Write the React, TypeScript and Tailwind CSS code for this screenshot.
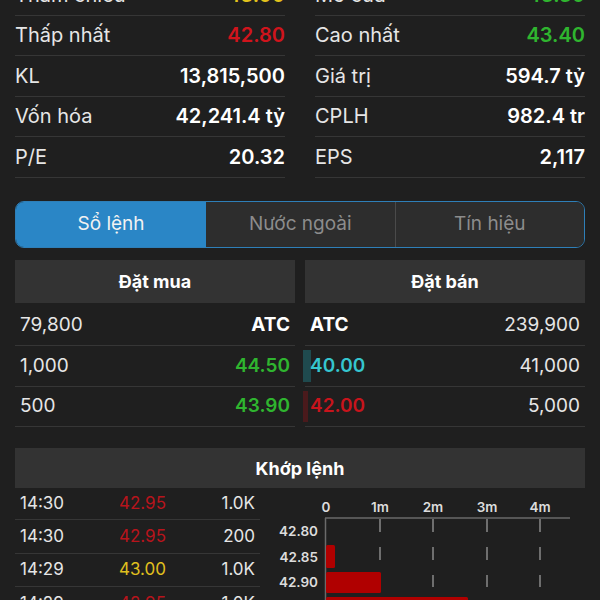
import React from "react";

const LEFT_STATS = [
  { label: "Tham chiếu", value: "43.00", color: "text-[#e3c31c]" },
  { label: "Thấp nhất", value: "42.80", color: "text-[#d0141c]" },
  { label: "KL", value: "13,815,500", color: "text-white" },
  { label: "Vốn hóa", value: "42,241.4 tỷ", color: "text-white" },
  { label: "P/E", value: "20.32", color: "text-white" },
];

const RIGHT_STATS = [
  { label: "Mở cửa", value: "43.30", color: "text-[#2fb52f]" },
  { label: "Cao nhất", value: "43.40", color: "text-[#2fb52f]" },
  { label: "Giá trị", value: "594.7 tỷ", color: "text-white" },
  { label: "CPLH", value: "982.4 tr", color: "text-white" },
  { label: "EPS", value: "2,117", color: "text-white" },
];

const TRADES = [
  { time: "14:30", price: "42.95", vol: "1.0K", color: "text-[#b8141c]" },
  { time: "14:30", price: "42.95", vol: "200", color: "text-[#b8141c]" },
  { time: "14:29", price: "43.00", vol: "1.0K", color: "text-[#e0c01e]" },
  { time: "14:29", price: "42.95", vol: "1.0K", color: "text-[#b8141c]" },
];

function StatColumn({ rows }: { rows: typeof LEFT_STATS }) {
  return (
    <div className="flex-1 flex flex-col">
      {rows.map((r) => (
        <div
          key={r.label}
          className="h-[40.5px] flex items-center justify-between border-b border-[#363636]"
        >
          <span className="text-[20px] text-[#e6e6e6]">{r.label}</span>
          <span className={`text-[20px] font-semibold ${r.color}`}>{r.value}</span>
        </div>
      ))}
    </div>
  );
}

function VolumeChart() {
  const grid = [120, 173, 227, 280];
  const tickRows = [
    [31, 44],
    [59, 72],
    [87, 99],
    [113, 125],
  ];
  return (
    <svg width="325" height="125" viewBox="0 0 325 125" className="block">
      {["0", "1m", "2m", "3m", "4m"].map((t, i) => (
        <text
          key={t}
          x={[66, 120, 173, 227, 280][i]}
          y={24}
          textAnchor="middle"
          fontSize="13.5"
          fontWeight="600"
          fill="#dcdcdc"
          fontFamily="Inter, 'Liberation Sans', sans-serif"
        >
          {t}
        </text>
      ))}
      <line x1="65" y1="30" x2="310" y2="30" stroke="#6a6a6a" strokeWidth="1.5" />
      <line x1="65.5" y1="30" x2="65.5" y2="125" stroke="#6a6a6a" strokeWidth="1.5" />
      {tickRows.map(([a, b], r) =>
        grid.map((x) => (
          <line key={`${r}-${x}`} x1={x} y1={a} x2={x} y2={b} stroke="#8a8a8a" strokeWidth="1.5" />
        ))
      )}
      <rect x="66" y="57" width="9" height="23" rx="1.5" fill="#b00000" />
      <rect x="66" y="84" width="55" height="21" rx="1.5" fill="#b00000" />
      <rect x="66" y="109" width="142" height="21" rx="1.5" fill="#b00000" />
      {[
        ["42.80", 48],
        ["42.85", 74],
        ["42.90", 99],
      ].map(([t, y]) => (
        <text
          key={t}
          x={58}
          y={y}
          textAnchor="end"
          fontSize="13.5"
          fontWeight="600"
          fill="#dcdcdc"
          fontFamily="Inter, 'Liberation Sans', sans-serif"
        >
          {t}
        </text>
      ))}
    </svg>
  );
}

export default function App() {
  return (
    <div className="w-[600px] h-[600px] overflow-hidden bg-[#1f1f1f] font-['Inter','Liberation_Sans',sans-serif]">
      <div className="px-[15px] -mt-[25px]">
        {/* Thống kê */}
        <div className="flex gap-[30px]">
          <StatColumn rows={LEFT_STATS} />
          <StatColumn rows={RIGHT_STATS} />
        </div>

        {/* Tabs */}
        <div className="mt-[23px] h-[47px] flex rounded-[9px] border border-[#2e7fb8] overflow-hidden">
          <div className="w-[190px] flex items-center justify-center bg-[#2a86c6] text-[19px] text-[#f2f2f2]">
            Sổ lệnh
          </div>
          <div className="flex-1 flex items-center justify-center bg-[#2d2d2d] text-[19px] text-[#8c8c8c] border-r border-[#4a4a4a]">
            Nước ngoài
          </div>
          <div className="flex-1 flex items-center justify-center bg-[#2d2d2d] text-[19px] text-[#8c8c8c]">
            Tín hiệu
          </div>
        </div>

        {/* Sổ lệnh */}
        <div className="mt-[12px] flex gap-[10px]">
          <div className="flex-1">
            <div className="h-[43px] flex items-center justify-center bg-[#333333] text-[18px] font-bold text-white">
              Đặt mua
            </div>
            <div className="mt-[3px]">
              {[
                ["79,800", "ATC", "text-white font-bold"],
                ["1,000", "44.50", "text-[#2fb52f] font-semibold"],
                ["500", "43.90", "text-[#2fb52f] font-semibold"],
              ].map(([q, p, c]) => (
                <div key={q} className="h-[40.5px] flex items-center justify-between px-[5px] border-b border-[#363636]">
                  <span className="text-[19px] text-[#e6e6e6]">{q}</span>
                  <span className={`text-[19px] ${c}`}>{p}</span>
                </div>
              ))}
            </div>
          </div>
          <div className="flex-1">
            <div className="h-[43px] flex items-center justify-center bg-[#333333] text-[18px] font-bold text-white">
              Đặt bán
            </div>
            <div className="mt-[3px]">
              <div className="h-[40.5px] flex items-center justify-between px-[5px] border-b border-[#363636]">
                <span className="text-[19px] text-white font-bold">ATC</span>
                <span className="text-[19px] text-[#e6e6e6]">239,900</span>
              </div>
              <div className="relative h-[40.5px] flex items-center justify-between px-[5px] border-b border-[#363636]">
                <span className="absolute left-[-2px] top-[4px] bottom-[4px] w-[8px] bg-[#1f4a4e]" />
                <span className="relative text-[19px] text-[#35c6cf] font-semibold">40.00</span>
                <span className="text-[19px] text-[#e6e6e6]">41,000</span>
              </div>
              <div className="relative h-[40.5px] flex items-center justify-between px-[5px] border-b border-[#363636]">
                <span className="absolute left-[-2px] top-[4px] bottom-[4px] w-[5px] bg-[#4a1a1c]" />
                <span className="relative text-[19px] text-[#c8141c] font-semibold">42.00</span>
                <span className="text-[19px] text-[#e6e6e6]">5,000</span>
              </div>
            </div>
          </div>
        </div>

        {/* Khớp lệnh */}
        <div className="mt-[21px] h-[40px] flex items-center justify-center bg-[#333333] text-[18px] font-bold text-white">
          Khớp lệnh
        </div>
        <div className="flex">
          <div className="w-[245px]">
            {TRADES.map((t, i) => (
              <div
                key={i}
                className={`flex items-center px-[5px] border-b border-[#363636] ${i === 0 ? "h-[32px]" : "h-[33.5px]"}`}
              >
                <span className="w-[80px] text-[17px] text-[#e6e6e6]">{t.time}</span>
                <span className={`flex-1 text-center text-[17px] ${t.color}`}>{t.price}</span>
                <span className="w-[70px] text-right text-[17px] text-[#e6e6e6]">{t.vol}</span>
              </div>
            ))}
          </div>
          <VolumeChart />
        </div>
      </div>
    </div>
  );
}
